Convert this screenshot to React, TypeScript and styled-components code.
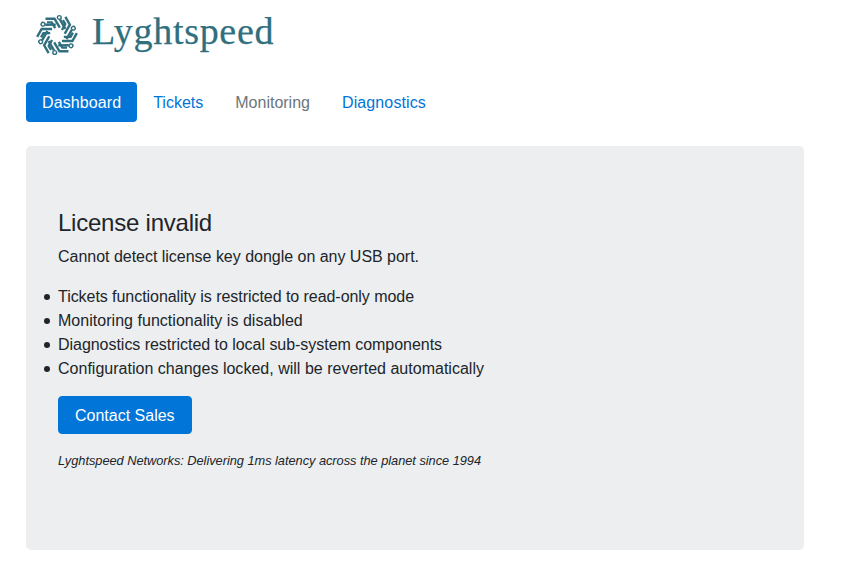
import React from "react";
import styled, { createGlobalStyle } from "styled-components";

const Global = createGlobalStyle`
  html, body { margin: 0; background: #fff; }
  body { font-family: "Liberation Sans", Arial, sans-serif; font-size: 16px; line-height: 24px; color: #212529; }
`;
const Page = styled.div`
  width: 778px;
  padding: 0 0 30px 26px;
`;
const Brand = styled.header`
  display: flex;
  align-items: center;
  height: 66px;
  padding-left: 10px;
  margin-bottom: 16px;
`;
const LogoMark = styled.svg`
  margin-top: 4px;
  flex: none;
`;
const Wordmark = styled.span`
  font-family: "Liberation Serif", "Times New Roman", serif;
  font-size: 38px;
  line-height: 40px;
  letter-spacing: 0.7px;
  -webkit-text-stroke: 0.25px #2f6f7e;
  color: #2f6f7e;
  margin: -4px 0 0 14px;
`;
const Nav = styled.nav`
  display: flex;
  margin-bottom: 24px;
`;
const Pill = styled.a<{ $active?: boolean; $muted?: boolean; $track?: number }>`
  display: block;
  padding: 9px 16px 7px;
  border-radius: 4px;
  letter-spacing: ${(p) => p.$track ?? 0}px;
  color: ${(p) => (p.$active ? "#fff" : p.$muted ? "#6c757d" : "#0275d8")};
  background: ${(p) => (p.$active ? "#0275d8" : "transparent")};
`;
const Jumbotron = styled.main`
  background: #eceef0;
  border-radius: 4.8px;
  padding: 63px 32px 79px;
`;
const Title = styled.h4`
  margin: 0 0 7px;
  font-size: 24px;
  line-height: 28.8px;
  font-weight: 400;
  letter-spacing: -0.23px;
`;
const Lead = styled.p`
  margin: 0 0 16px;
  letter-spacing: -0.02px;
`;
const List = styled.ul`
  margin: 0 0 15px;
  padding: 0;
  list-style: none;
`;
const Item = styled.li<{ $track: number }>`
  position: relative;
  letter-spacing: ${(p) => p.$track}px;
  &::before {
    content: "";
    position: absolute;
    left: -14px;
    top: 9px;
    width: 6px;
    height: 6px;
    border-radius: 50%;
    background: #212529;
  }
`;
const Button = styled.button`
  display: block;
  font: inherit;
  color: #fff;
  background: #0275d8;
  border: 1px solid #0275d8;
  border-radius: 4px;
  padding: 7px 16px 5px;
  height: 38px;
`;
const Tagline = styled.p`
  margin: 17px 0 0;
  font-size: 12.8px;
  line-height: 20px;
  font-style: italic;
  letter-spacing: -0.03px;
`;

const Logo = () => (
  <LogoMark width="42" height="42" viewBox="-21 -21 42 42" fill="none" stroke="#2f6f7e">
    {[0, 60, 120, 180, 240, 300].map((a) => (
      <g key={a} transform={`rotate(${a})`}>
        <circle cx="2.3" cy="-17.5" r="1.9" strokeWidth="1.4" />
        <path d="M3 -15.3 L8.4 -6.2" strokeWidth="2.4" />
        <path d="M-11.5 -16.3 H-2.5 L2.8 -7.3" strokeWidth="2.4" />
        <path d="M-10 -12.6 H-5.3 L-1.8 -6.8" strokeWidth="2.4" />
      </g>
    ))}
  </LogoMark>
);

export default function App() {
  return (
    <>
      <Global />
      <Page>
        <Brand>
          <Logo />
          <Wordmark>Lyghtspeed</Wordmark>
        </Brand>
        <Nav>
          <Pill $active $track={0.1}>Dashboard</Pill>
          <Pill>Tickets</Pill>
          <Pill $muted>Monitoring</Pill>
          <Pill $track={0.12}>Diagnostics</Pill>
        </Nav>
        <Jumbotron>
          <Title>License invalid</Title>
          <Lead>Cannot detect license key dongle on any USB port.</Lead>
          <List>
            <Item $track={-0.05}>Tickets functionality is restricted to read-only mode</Item>
            <Item $track={0.03}>Monitoring functionality is disabled</Item>
            <Item $track={-0.036}>Diagnostics restricted to local sub-system components</Item>
            <Item $track={0.015}>Configuration changes locked, will be reverted automatically</Item>
          </List>
          <Button>Contact Sales</Button>
          <Tagline>Lyghtspeed Networks: Delivering 1ms latency across the planet since 1994</Tagline>
        </Jumbotron>
      </Page>
    </>
  );
}
